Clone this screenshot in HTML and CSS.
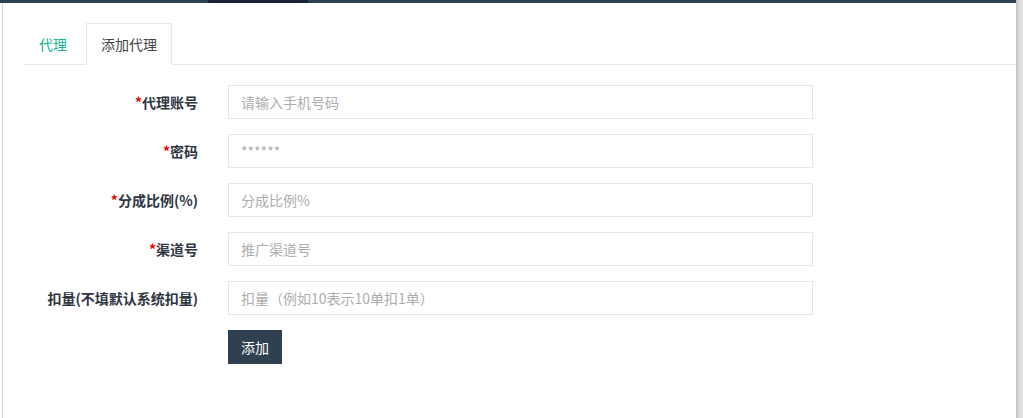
FILE: index.html
```html
<!DOCTYPE html>
<html lang="zh-CN">
<head>
<meta charset="utf-8">
<link rel="stylesheet" href="styles.css">
</head>
<body>
<div class="frame">
  <div class="main">
    <div class="topbar"><span class="topbar-seg"></span></div>
    <div class="content">
      <div class="tabs">
        <div class="tab">代理</div>
        <div class="tab active">添加代理</div>
      </div>
      <form class="form">
        <label class="label"><span class="req">*</span>代理账号</label>
        <input class="input" type="text" placeholder="请输入手机号码">
        <label class="label"><span class="req">*</span>密码</label>
        <input class="input" type="text" placeholder="******">
        <label class="label"><span class="req">*</span>分成比例(%)</label>
        <input class="input" type="text" placeholder="分成比例%">
        <label class="label"><span class="req">*</span>渠道号</label>
        <input class="input" type="text" placeholder="推广渠道号">
        <label class="label">扣量(不填默认系统扣量)</label>
        <input class="input" type="text" placeholder="扣量（例如10表示10单扣1单）">
        <span></span>
        <div><button class="btn" type="button">添加</button></div>
      </form>
    </div>
  </div>
  <div class="edge"></div>
</div>
</body>
</html>
```
FILE: styles.css
```css
* { box-sizing: border-box; }
html, body { margin: 0; padding: 0; background: #fff; }
body {
  font-family: "Noto Sans CJK SC", "Noto Sans", sans-serif;
  color: #333;
  height: 418px;
  overflow: hidden;
}
.frame {
  display: flex;
  height: 418px;
}
.main {
  flex: 1;
  display: flex;
  flex-direction: column;
}
.topbar {
  height: 3px;
  background: #2f4050;
  display: flex;
}
.topbar-seg {
  margin-left: 208px;
  width: 100px;
  background: #1a2533;
}
.content {
  flex: 1;
  margin-left: 2px;
  border-left: 1px solid #d6d6d6;
  padding: 20px 0 0 21px;
}
.edge {
  width: 7px;
  background: linear-gradient(to right, #bdbdbd, #d8d8d8 40%, #e6e6e6);
}
.tabs {
  display: flex;
  border-bottom: 1px solid #e7eaec;
  height: 42px;
}
.tab {
  font-size: 14px;
  line-height: 40px;
  padding: 0 18px 0 14px;
  color: #1ab394;
  border: 1px solid transparent;
  height: 42px;
}
.tab.active {
  padding: 0 14px;
  color: #444;
  border-color: #e7eaec;
  border-bottom-color: #fff;
  background: #fff;
}
.form {
  display: grid;
  grid-template-columns: 174px 585px;
  column-gap: 30px;
  row-gap: 15px;
  margin-top: 20px;
  align-items: center;
}
.label {
  text-align: right;
  font-size: 14px;
  font-weight: bold;
  color: #2f3542;
}
.req { color: #e00; font-weight: bold; }
.input {
  height: 34px;
  border: 1px solid #e5e6e7;
  padding: 0 12px;
  font-size: 14px;
  font-family: inherit;
  color: #333;
  outline: none;
}
.input::placeholder { color: #adadad; }
.btn {
  height: 34px;
  padding: 0 13px;
  border: none;
  background: #2f4050;
  color: #fff;
  font-size: 14px;
  font-family: inherit;
}
```
